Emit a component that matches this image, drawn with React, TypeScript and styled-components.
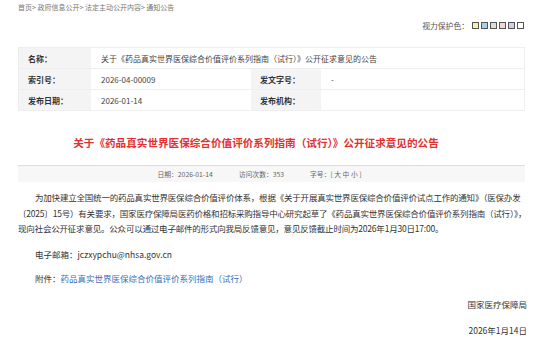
import React from "react";
import styled, { createGlobalStyle } from "styled-components";

const GlobalStyle = createGlobalStyle`
	html, body {
		margin: 0;
		padding: 0;
		background: #ffffff;
	}
	body {
		font-family: "Noto Sans CJK SC", "Liberation Sans", sans-serif;
		color: #333333;
	}
`;

const Page = styled.main`
	width: 507px;
	padding: 0 0 0 18px;
	display: flex;
	flex-direction: column;
`;

const Breadcrumb = styled.nav`
	font-size: 7px;
	line-height: 14px;
	color: #777777;
	white-space: nowrap;
`;

const ToolRow = styled.div`
	margin-top: 4px;
	height: 14px;
	display: flex;
	justify-content: flex-end;
	align-items: center;
	gap: 3px;
	padding-right: 1px;
	font-size: 7.8px;
	color: #555555;
`;

const Swatches = styled.div`
	display: flex;
	gap: 2px;
`;

const Swatch = styled.span<{ $color: string }>`
	width: 7px;
	height: 7px;
	box-sizing: border-box;
	border: 1px solid #555555;
	background: ${(p) => p.$color};
`;

const MetaTable = styled.div`
	margin-top: 15px;
	display: grid;
	grid-template-columns: 72px 160px 70px 1fr;
	grid-auto-rows: 21px;
	border: 1px solid #eeeeee;
	border-bottom: none;
	font-size: 8px;
`;

const Cell = styled.div<{ $label?: boolean; $span?: number }>`
	display: flex;
	align-items: center;
	padding-left: ${(p) => (p.$label ? "9px" : "10px")};
	border-bottom: 1px solid #eeeeee;
	background: ${(p) => (p.$label ? "#f4f4f4" : "#ffffff")};
	font-weight: ${(p) => (p.$label ? 700 : 400)};
	color: ${(p) => (p.$label ? "#333333" : "#444444")};
	grid-column: ${(p) => (p.$span ? `span ${p.$span}` : "auto")};
	white-space: nowrap;
	overflow: hidden;
`;

const Title = styled.h1`
	margin: 22px 0 0;
	padding-right: 31px;
	font-size: 10.6px;
	line-height: 20px;
	font-weight: 700;
	color: #e2312f;
	text-align: center;
	white-space: nowrap;
`;

const InfoBar = styled.div`
	margin-top: 12px;
	height: 17px;
	box-sizing: border-box;
	border-top: 1px solid #dddddd;
	background: #f7f7f7;
	display: flex;
	justify-content: center;
	align-items: center;
	gap: 26px;
	padding-right: 24px;
	font-size: 6.8px;
	color: #666666;
`;

const Body = styled.p`
	margin: 8px 0 0;
	font-size: 8.5px;
	line-height: 15.5px;
	letter-spacing: -0.2px;
	white-space: nowrap;
	color: #333333;
`;

const Indent = styled.span`
	display: inline-block;
	width: 17px;
`;

const Line = styled.p<{ $top: number; $right?: boolean }>`
	margin: ${(p) => p.$top}px ${(p) => (p.$right ? "-2px" : "0")} 0 0;
	font-size: 8.5px;
	line-height: 15.5px;
	color: #333333;
	padding-left: ${(p) => (p.$right ? "0" : "17px")};
	text-align: ${(p) => (p.$right ? "right" : "left")};
`;

const Attachment = styled.a`
	color: #3b6fb6;
	text-decoration: none;
`;

const swatchColors = ["#f6f1a6", "#9fd4ee", "#dddddd", "#f8d3dc", "#dcc6f2", "#ffffff"];

export default function App() {
	return (
		<>
			<GlobalStyle />
			<Page>
				<Breadcrumb>首页&gt; 政府信息公开&gt; 法定主动公开内容&gt; 通知公告</Breadcrumb>
				<ToolRow>
					<span>视力保护色：</span>
					<Swatches>
						{swatchColors.map((c) => (
							<Swatch key={c} $color={c} />
						))}
					</Swatches>
				</ToolRow>

				<MetaTable>
					<Cell $label>名称：</Cell>
					<Cell $span={3}>关于《药品真实世界医保综合价值评价系列指南（试行）》公开征求意见的公告</Cell>
					<Cell $label>索引号：</Cell>
					<Cell>2026-04-00009</Cell>
					<Cell $label>发文字号：</Cell>
					<Cell>-</Cell>
					<Cell $label>发布日期：</Cell>
					<Cell>2026-01-14</Cell>
					<Cell $label>发布机构：</Cell>
					<Cell></Cell>
				</MetaTable>

				<Title>关于《药品真实世界医保综合价值评价系列指南（试行）》公开征求意见的公告</Title>

				<InfoBar>
					<span>日期：2026-01-14</span>
					<span>访问次数：353</span>
					<span>字号：[ 大 中 小 ]</span>
				</InfoBar>

				<Body>
					<Indent />
					为加快建立全国统一的药品真实世界医保综合价值评价体系，根据《关于开展真实世界医保综合价值评价试点工作的通知》（医保办发
					<br />
					〔2025〕15号）有关要求，国家医疗保障局医药价格和招标采购指导中心研究起草了《药品真实世界医保综合价值评价系列指南（试行）》，
					<br />
					现向社会公开征求意见。公众可以通过电子邮件的形式向我局反馈意见，意见反馈截止时间为2026年1月30日17:00。
				</Body>

				<Line $top={10}>电子邮箱：jczxypchu@nhsa.gov.cn</Line>
				<Line $top={8.5}>
					附件：<Attachment href="#">药品真实世界医保综合价值评价系列指南（试行）</Attachment>
				</Line>
				<Line $top={10.5} $right>
					国家医疗保障局
				</Line>
				<Line $top={10.5} $right>
					2026年1月14日
				</Line>
			</Page>
		</>
	);
}
